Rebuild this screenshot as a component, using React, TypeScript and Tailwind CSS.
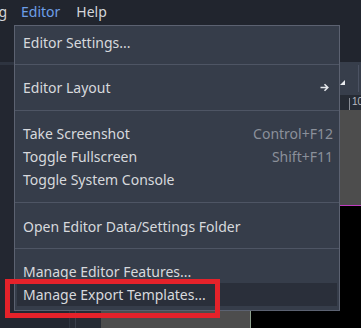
import React from "react";

type Item =
  | { kind: "item"; label: string; shortcut?: string; arrow?: boolean; hover?: boolean }
  | { kind: "sep"; h: string; line: string };

const items: Item[] = [
  { kind: "item", label: "Editor Settings..." },
  { kind: "sep", h: "h-[22px]", line: "pt-[10px]" },
  { kind: "item", label: "Editor Layout", arrow: true },
  { kind: "sep", h: "h-[23px]", line: "pt-[11px]" },
  { kind: "item", label: "Take Screenshot", shortcut: "Control+F12" },
  { kind: "item", label: "Toggle Fullscreen", shortcut: "Shift+F11" },
  { kind: "item", label: "Toggle System Console" },
  { kind: "sep", h: "h-[24px]", line: "pt-[11px]" },
  { kind: "item", label: "Open Editor Data/Settings Folder" },
  { kind: "sep", h: "h-[22px]", line: "pt-[10px]" },
  { kind: "item", label: "Manage Editor Features..." },
  { kind: "item", label: "Manage Export Templates...", hover: true },
];

function Arrow() {
  return (
    <svg width="9" height="9" viewBox="0 0 9 9" className="block">
      <path d="M0.5 4.5H7.5M4.5 1.2L7.8 4.5L4.5 7.8" stroke="#e3e5e9" strokeWidth="1.6" fill="none" />
    </svg>
  );
}

export default function App() {
  return (
    <div
      className="relative w-[361px] h-[328px] overflow-hidden bg-[#21252e] flex flex-col"
      style={{ fontFamily: '"Noto Sans", "DejaVu Sans", sans-serif' }}
    >
      {/* Top menu bar */}
      <div className="h-[62px] shrink-0 bg-[#21252e]">
        <div className="flex items-center h-[25px] text-[14px] leading-[25px] -mt-[1px]">
          <span className="text-[#d4d6da] -ml-[37px]">Debug</span>
          <span className="text-[#6d9fe8] ml-[14px]">Editor</span>
          <span className="text-[#d4d6da] ml-[16px]">Help</span>
        </div>
      </div>

      {/* Lower workspace */}
      <div className="flex flex-1">
        <div className="w-[69px] shrink-0 flex flex-col">
          <div className="h-[3px] bg-[#2e3440]" />
          <div className="flex-1 bg-[#232731]" />
        </div>
        <div className="w-px bg-[#2f3540]" />
        <div className="flex-1 flex flex-col">
          <div className="h-[33px] shrink-0 bg-[#373e4b] relative flex">
            <div className="flex-1" />
            <div className="relative w-[19px]">
              <div className="absolute left-[1px] top-[18px] w-0 h-0 border-l-[5px] border-l-transparent border-b-[5px] border-b-[#e8eaee]" />
            </div>
            <div className="w-px bg-[#4b5262] my-[3px]" />
            <div className="w-[2px]" />
          </div>
          <div className="h-[15px] shrink-0 bg-[#262b34] flex">
            <div className="flex-1" />
            <div className="w-px bg-[#8a8e96] mt-[3px]" />
            <span className="ml-[2px] w-[9px] text-[10px] leading-[14px] text-[#b8bbc0] overflow-hidden" style={{ fontFamily: '"Liberation Sans", sans-serif' }}>
              10
            </span>
          </div>
          <div className="flex-1 flex">
            <div className="w-[5px] bg-[#262b34]" />
            <div className="w-px bg-[#3a404b]" />
            <div className="w-[25px] bg-[#262b34]" />
            <div className="flex-1 relative bg-[#4d4d4d]">
              <div className="absolute left-[149px] top-[95px] right-0 bottom-0 bg-black border-t border-t-[#c03cc0] border-l border-l-[#8ea08e]" />
            </div>
          </div>
        </div>
      </div>

      {/* Popup menu */}
      <div className="absolute left-[14px] top-[25px] w-[326px] h-[286px] bg-[#363d4a] border border-[#5c6271] pt-[5px] px-[2px]">
        {items.map((it, i) =>
          it.kind === "sep" ? (
            <div key={i} className={`${it.h} ${it.line} -mx-[2px]`}>
              <div className="h-px bg-[#4e5564]" />
            </div>
          ) : (
            <div
              key={i}
              className={`h-[23px] flex items-center pl-[6px] pr-[4px] text-[14px] leading-[23px] ${
                it.hover ? "bg-[#2a2f3a]" : ""
              }`}
            >
              <span className="flex-1 text-[#d7d9dd] whitespace-nowrap">{it.label}</span>
              {it.shortcut && <span className="text-[#8b909a] whitespace-nowrap">{it.shortcut}</span>}
              {it.arrow && (
                <span className="mr-[4px]">
                  <Arrow />
                </span>
              )}
            </div>
          )
        )}
      </div>

      {/* Red highlight box */}
      <div className="absolute left-[5px] top-[279px] w-[215px] h-[39px] border-[5px] border-[#e5222a]" />
    </div>
  );
}
